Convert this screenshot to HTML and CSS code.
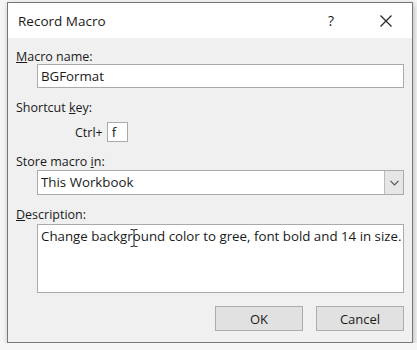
FILE: index.html
```html
<!DOCTYPE html>
<html lang="en">
<head>
    <meta charset="UTF-8">
    <meta name="viewport" content="width=device-width, initial-scale=1.0">
    <title>Record Macro</title>
    <link rel="stylesheet" href="styles.css">
</head>
<body>
    <div class="dialog">
        <div class="titlebar">
            <span class="title">Record Macro</span>
            <span class="help">?</span>
            <span class="close">
                <svg width="12" height="12" viewBox="0 0 12 12">
                    <path d="M0.5 0.5 L11.5 11.5 M11.5 0.5 L0.5 11.5" stroke="#222" stroke-width="1.2" fill="none"/>
                </svg>
            </span>
        </div>
        <div class="content">
            <label class="field-label"><u>M</u>acro name:</label>
            <div class="textbox">BGFormat</div>

            <label class="field-label gap">Shortcut <u>k</u>ey:</label>
            <div class="shortcut">
                <span class="ctrl">Ctrl+</span>
                <div class="keybox">f</div>
            </div>

            <label class="field-label gap">Store macro <u>i</u>n:</label>
            <div class="select">
                <span class="select-value">This Workbook</span>
                <span class="arrow">
                    <svg width="9" height="6" viewBox="0 0 9 6">
                        <path d="M0.5 0.8 L4.5 4.8 L8.5 0.8" stroke="#555" stroke-width="1.2" fill="none"/>
                    </svg>
                </span>
            </div>

            <label class="field-label gap"><u>D</u>escription:</label>
            <div class="textarea">
                Change background color to gree, font bold and 14 in size.
                <svg class="ibeam" width="8" height="18" viewBox="0 0 8 18">
                    <path d="M0.5 0.5 H3 Q4 0.5 4 2 V16 Q4 17.5 3 17.5 H0.5 M7.5 0.5 H5 Q4 0.5 4 2 M4 16 Q4 17.5 5 17.5 H7.5" stroke="#333" stroke-width="1" fill="none"/>
                </svg>
            </div>

            <div class="buttons">
                <button class="btn">OK</button>
                <button class="btn">Cancel</button>
            </div>
        </div>
    </div>
</body>
</html>
```

FILE: styles.css
```css
body {
    margin: 0;
    background-color: #f6f6f6;
    font-family: "Open Sans", "Noto Sans", sans-serif;
    font-size: 12.5px;
    color: #1a1a1a;
}
.dialog {
    width: 404px;
    margin: 2px 0 0 7px;
    border: 1px solid #777;
    background-color: #f0f0f0;
    box-shadow: 1px 2px 6px rgba(0,0,0,0.25);
}
.titlebar {
    display: flex;
    align-items: center;
    height: 35px;
    background-color: #fff;
}
.title {
    margin-left: 10px;
    font-size: 13.5px;
    flex: 1;
}
.help {
    font-size: 14px;
    width: 12px;
    margin-right: 40px;
}
.close {
    display: flex;
    margin-right: 20px;
}
.content {
    padding: 11px 8px 11px 8px;
}
.field-label {
    display: block;
    line-height: 15px;
}
.field-label.gap {
    margin-top: 12px;
}
.textbox,
.select,
.textarea,
.keybox {
    background-color: #fff;
    border: 1px solid #aaa;
    box-sizing: border-box;
    font-size: 13.3px;
}
.textbox {
    margin-left: 21px;
    height: 24px;
    line-height: 22px;
    padding-left: 3px;
}
.shortcut {
    display: flex;
    align-items: center;
    margin-top: 7px;
    margin-left: 59px;
}
.ctrl {
    margin-right: 4px;
}
.keybox {
    width: 21px;
    height: 20px;
    line-height: 18px;
    padding-left: 4px;
}
.select {
    display: flex;
    margin-top: 1px;
    margin-left: 21px;
    height: 25px;
}
.select-value {
    flex: 1;
    line-height: 23px;
    padding-left: 3px;
}
.arrow {
    display: flex;
    align-items: center;
    justify-content: center;
    width: 18px;
    background-color: #e6e6e6;
    border-left: 1px solid #bbb;
}
.textarea {
    position: relative;
    margin-top: 2px;
    margin-left: 21px;
    height: 69px;
    padding: 3px 0 0 3px;
    line-height: 16px;
    white-space: nowrap;
}
.ibeam {
    position: absolute;
    left: 92px;
    top: 4px;
}
.buttons {
    display: flex;
    justify-content: flex-end;
    gap: 13px;
    margin-top: 13px;
}
.btn {
    width: 88px;
    height: 25px;
    background-color: #e1e1e1;
    border: 1px solid #adadad;
    font-family: inherit;
    font-size: 13px;
    color: #1a1a1a;
    padding: 0;
}
```
